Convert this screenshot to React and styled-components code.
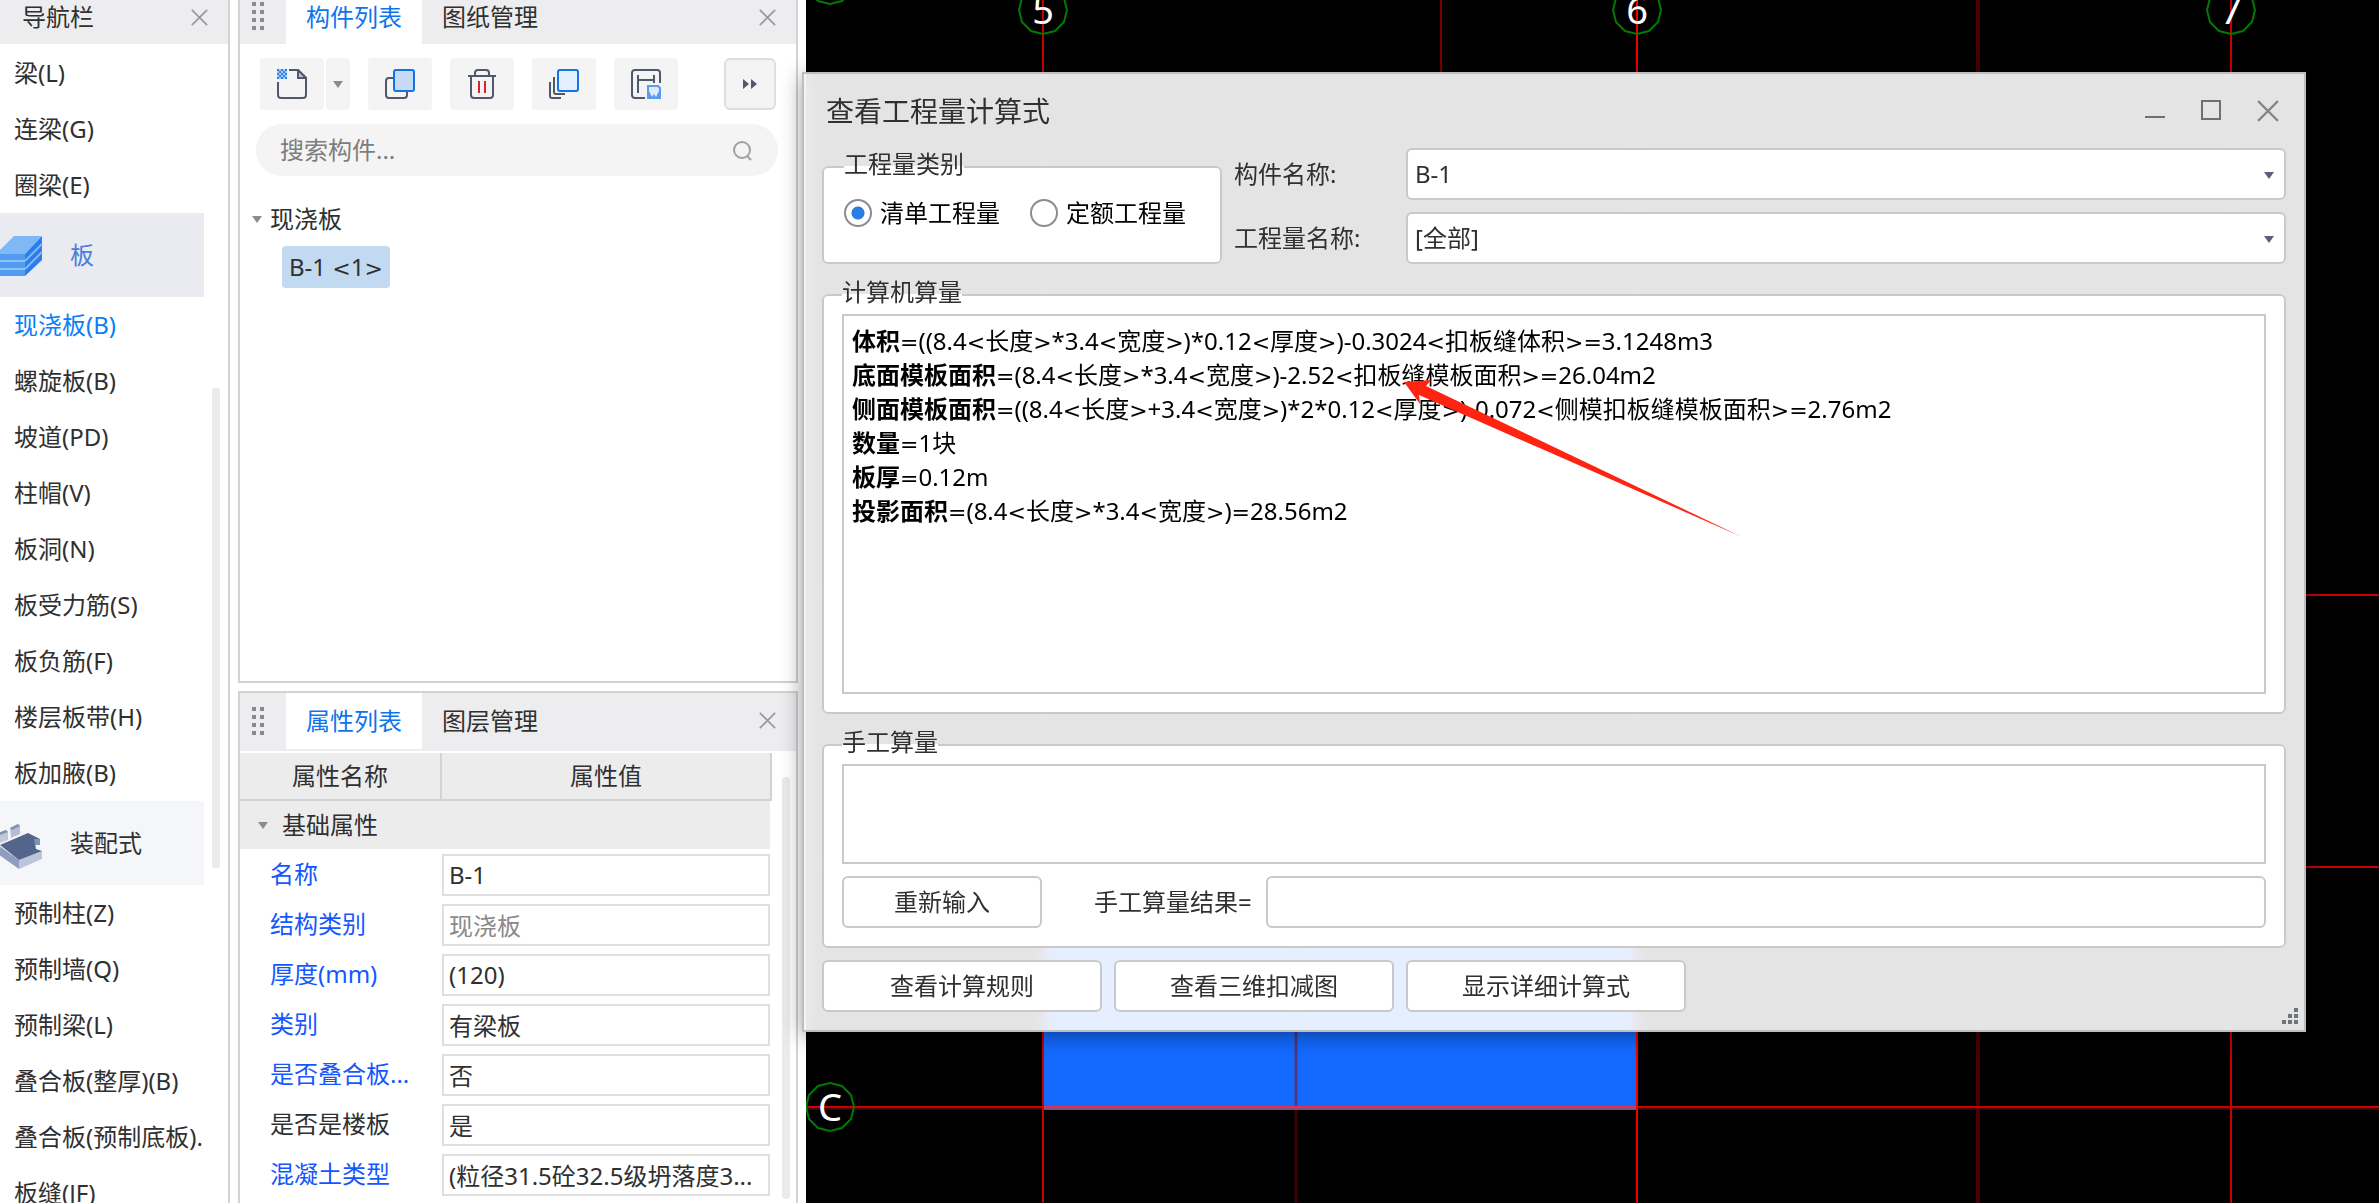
import React from "react"
import styled, { createGlobalStyle, css } from "styled-components"

const GlobalStyle = createGlobalStyle`
  *, *::before, *::after {
    box-sizing: border-box;
  }

  body {
    margin: 0;
    background: #fff;
    color: #303030;
    font-family: "Noto Sans", "Noto Sans CJK SC", sans-serif;
    font-size: 24px;
    line-height: 34px;
  }

  button, input, select, textarea {
    font: inherit;
    color: inherit;
  }
`

const Workspace = styled.div`
  display: flex;
  gap: 8px;
  height: 100vh;
  overflow: hidden;
  position: relative;
`

/* ---------- shared panel parts ---------- */

const PanelHeader = styled.header`
  display: flex;
  flex: none;
  align-items: stretch;
  height: ${(p) => (p.$tall ? 58 : 44)}px;
  padding-bottom: ${(p) => (p.$tall ? 2 : 0)}px;
  padding-right: 20px;
  background: #ededf0;
`

const CloseButton = styled.button`
  display: flex;
  align-items: center;
  margin-left: auto;
  padding: 0;
  border: 0;
  background: none;
  color: #9a9a9c;
`

const Grip = styled.svg`
  flex: none;
  width: 46px;
  height: 100%;
`

const Tab = styled.button`
  padding: 0 20px;
  border: 0;
  background: ${(p) => (p.$active ? "#fff" : "transparent")};
  color: ${(p) => (p.$active ? "#0f73ee" : "#303030")};
`

/* the upper strip is cut by the window edge, so its content sits high */
const upperStrip = css`
  ${Tab}, ${CloseButton} {
    padding-bottom: 10px;
  }
`

const ScrollThumb = styled.div`
  flex: none;
  width: 8px;
  border-radius: 3px;
  background: #ebebeb;
`

/* wider angle brackets and equals signs than the text face has */
const Sign = styled.span`
  font-family: "DejaVu Sans", sans-serif;
  font-size: 22px;
  line-height: 1;
`

/* ---------- navigation ---------- */

const NavPanel = styled.nav`
  display: flex;
  flex: none;
  flex-direction: column;
  width: 230px;
  border-right: 2px solid #d2d2d5;
  background: #fff;

  ${PanelHeader} {
    ${upperStrip}
    padding-left: 22px;
  }
`

const NavTitle = styled.span`
  flex: 1;
`

const NavBody = styled.div`
  display: flex;
  flex: 1;
  gap: 8px;
  min-height: 0;
  padding-top: 1px;

  ${ScrollThumb} {
    height: 480px;
    margin-top: 343px;
  }
`

const NavList = styled.div`
  width: 204px;
  overflow: hidden;
`

const NavLink = styled.a`
  display: block;
  height: 56px;
  padding-left: 14px;
  line-height: 56px;
  white-space: nowrap;
  text-decoration: none;
  color: ${(p) => (p.$active ? "#0a80f5" : "#303030")};
`

const NavGroup = styled.a`
  display: flex;
  align-items: center;
  gap: 10px;
  height: 84px;
  text-decoration: none;
  background: ${(p) => (p.$open ? "#eaebf0" : "#f5f6f9")};
  color: ${(p) => (p.$open ? "#4a7de0" : "#303030")};
`

/* ---------- middle column ---------- */

const DockColumn = styled.div`
  display: grid;
  flex: none;
  grid-template-rows: 4fr 3fr;
  gap: 8px;
  width: 560px;
`

const Panel = styled.section`
  display: flex;
  flex-direction: column;
  min-height: 0;
  overflow: hidden;
  border: 2px solid #d2d2d5;
  border-top-width: ${(p) => (p.$cut ? 0 : 2)}px;
  border-bottom-width: ${(p) => (p.$cut ? 2 : 0)}px;
  background: #fff;

  ${(p) => p.$cut && upperStrip}
`

const Toolbar = styled.div`
  display: flex;
  gap: 18px;
  padding: 14px 20px;
`

const ToolButton = styled.button`
  display: flex;
  align-items: center;
  justify-content: center;
  width: ${(p) => (p.$narrow ? 24 : 64)}px;
  height: 52px;
  padding: 0;
  border: 0;
  border-radius: 4px;
  background: #f4f4f5;
`

const MoreButton = styled(ToolButton)`
  width: 52px;
  margin-left: auto;
  border: 2px solid #dedee0;
  border-radius: 6px;
`

const SplitButton = styled.div`
  display: flex;
  gap: 2px;
`

const SearchBox = styled.label`
  display: flex;
  align-items: center;
  height: 52px;
  margin: 0 18px 0 16px;
  padding: 0 24px;
  border-radius: 26px;
  background: #f4f4f5;

  input {
    flex: 1;
    min-width: 0;
    padding: 0;
    border: 0;
    outline: 0;
    background: none;
  }

  input::placeholder {
    color: #7d7d7d;
    opacity: 1;
  }
`

const Tree = styled.ul`
  margin: 0;
  padding: 26px 12px;
  list-style: none;
`

const TreeBranch = styled.div`
  display: flex;
  align-items: center;
  gap: 8px;
  height: 34px;
`

const TreeItem = styled.button`
  display: block;
  height: 42px;
  margin: 10px 0 0 30px;
  padding: 0 7px;
  border: 0;
  border-radius: 4px;
  background: #c2d9f2;
`

const PropertyArea = styled.div`
  display: flex;
  gap: 10px;
  min-height: 0;
  padding-top: 2px;

  ${ScrollThumb} {
    margin-top: 24px;
  }
`

const PropertyTable = styled.table`
  flex: none;
  width: 532px;
  border-collapse: separate;
  border-spacing: 0;
  table-layout: fixed;

  th, td {
    padding: 0;
    font-weight: 400;
    text-align: left;
  }

  thead th {
    height: 48px;
    border-right: 2px solid #d2d2d5;
    border-bottom: 2px solid #d2d2d5;
    background: #ececec;
    text-align: center;
  }

  thead th:first-child {
    width: 202px;
  }
`

const SectionCell = styled.td`
  height: 48px;
  border-right: 2px solid #fff;
  background: #ececec;

  div {
    display: flex;
    align-items: center;
    gap: 14px;
    padding-left: 18px;
  }
`

const PropertyRow = styled.tr`
  height: 50px;

  th {
    padding-left: 30px;
    white-space: nowrap;
    color: ${(p) => (p.$plain ? "#303030" : "#1557ff")};
  }

  td {
    padding: 5px 2px 3px 0;
  }

  input {
    display: block;
    width: 100%;
    height: 42px;
    padding: 0 5px;
    border: 2px solid #dfdfdf;
    outline: 0;
    background: #fff;
    color: ${(p) => (p.$disabled ? "#8a8a8a" : "#303030")};
  }
`

/* ---------- drawing area ---------- */

const DrawingArea = styled.main`
  flex: 1;
  min-width: 0;
  background: #000;

  svg {
    display: block;
    width: 100%;
    height: 100%;
  }
`

/* ---------- dialog ---------- */

const Dialog = styled.section`
  position: absolute;
  top: 72px;
  left: 802px;
  right: 73px;
  padding: 0 18px 18px;
  border: 2px solid #bdbebf;
  background: rgba(255, 255, 255, 0.894);
  backdrop-filter: blur(8px);
  box-shadow: 0 4px 20px rgba(0, 0, 0, 0.4);
`

const TitleBar = styled.header`
  display: flex;
  align-items: center;
  gap: 36px;
  height: 74px;
  padding-right: 7px;

  h1 {
    flex: 1;
    margin: 0;
    padding-left: 4px;
    font-size: 28px;
    font-weight: 400;
  }

  button {
    display: flex;
    padding: 0;
    border: 0;
    background: none;
  }
`

const FilterRow = styled.div`
  display: grid;
  grid-template-columns: 400px 160px 1fr;
  grid-template-rows: 52px 52px;
  gap: 12px;
  align-items: center;
`

const Group = styled.fieldset`
  min-width: 0;
  margin: 16px 0 0;
  padding: 4px 18px 18px;
  border: 2px solid #c9c9c9;
  border-radius: 6px;
  background: #fff;

  legend {
    padding: 0 0 6px;
    line-height: 24px;
  }
`

const RadioGroup = styled(Group)`
  display: flex;
  grid-row: span 2;
  align-items: flex-start;
  align-self: end;
  gap: 30px;
  height: 112px;
  margin: 0;
  padding: 14px 20px 0;
`

const Radio = styled.label`
  display: flex;
  align-items: center;
  gap: 8px;
  color: #000;

  input {
    appearance: none;
    width: 28px;
    height: 28px;
    margin: 0;
    border: 2px solid #8c8c8c;
    border-radius: 50%;
    background: #fff;
  }

  input:checked {
    background: radial-gradient(circle, #2a7de1 0 6px, #fff 7px);
  }
`

const SelectBox = styled.div`
  position: relative;

  select {
    display: block;
    width: 100%;
    height: 52px;
    padding: 0 30px 0 7px;
    appearance: none;
    border: 2px solid #c9c9c9;
    border-radius: 6px;
    background: #fff;
  }

  svg {
    position: absolute;
    top: 23px;
    right: 12px;
    pointer-events: none;
  }
`

const FormulaBox = styled.div`
  height: 380px;
  padding: 8px;
  border: 2px solid #c9c9c9;
  background: #fff;
  color: #000;

  p {
    margin: 0;
    white-space: nowrap;
  }
`

const ManualInput = styled.textarea`
  display: block;
  width: 100%;
  height: 100px;
  padding: 8px;
  border: 2px solid #c9c9c9;
  outline: 0;
  resize: none;
  background: #fff;
`

const ResultRow = styled.div`
  display: flex;
  align-items: center;
  gap: 12px;
  margin-top: 12px;

  label {
    width: 160px;
    margin-left: 40px;
    white-space: nowrap;
  }

  input {
    flex: 1;
    min-width: 0;
    height: 52px;
    padding: 0 8px;
    border: 2px solid #c9c9c9;
    border-radius: 6px;
    outline: 0;
    background: #fff;
  }
`

const Button = styled.button`
  width: ${(p) => (p.$small ? 200 : 280)}px;
  height: 52px;
  padding: 0;
  border: 2px solid #c9c9c9;
  border-radius: 6px;
  background: #fff;
`

const Footer = styled.footer`
  display: flex;
  gap: 12px;
  margin-top: 12px;
`

const ResizeGrip = styled.svg`
  position: absolute;
  right: 6px;
  bottom: 6px;
`

const PointerArrow = styled.svg`
  position: absolute;
  top: 304px;
  left: 596px;
  pointer-events: none;
`

/* ---------- icons ---------- */

const CrossIcon = ({ size = 17, color = "#9a9a9c" }) => (
  <svg width={size} height={size} viewBox="0 0 20 20" stroke={color} strokeWidth="2">
    <path d="M1 1L19 19M19 1L1 19" />
  </svg>
)

const CaretIcon = ({ color = "#8c8c8c" }) => (
  <svg width="10" height="8" viewBox="0 0 10 8" fill={color}>
    <path d="M0 1H10L5 8Z" />
  </svg>
)

const GripIcon = ({ top }) => (
  <Grip fill="#8b8b8d">
    {[0, 1, 2, 3].map((row) => (
      <React.Fragment key={row}>
        <rect x="12" y={top + row * 8} width="4" height="4" />
        <rect x="20" y={top + row * 8} width="4" height="4" />
      </React.Fragment>
    ))}
  </Grip>
)

const SlabIcon = () => (
  <svg width="60" height="60">
    <path d="M14 11H42L25 29H-4Z" fill="#7fb8f5" />
    <path d="M42 11V35L25 51V29Z" fill="#2a7cf0" />
    <path d="M42 19L25 36M42 27L25 44" stroke="#7fb8f5" strokeWidth="2" />
    <path d="M-4 29H25V35H-4ZM-4 37H25V43H-4ZM-4 45H25V51H-4Z" fill="#529df3" />
    <path d="M-4 35H25V37H-4ZM-4 43H25V45H-4Z" fill="#8fc2f8" />
  </svg>
)

const PrefabIcon = () => (
  <svg width="60" height="60">
    <path d="M-2 20L6 17L8 19V27L0 30Z" fill="#c0c8da" />
    <path d="M-2 20L6 17L8 19L0 22Z" fill="#8290b2" />
    <path d="M10 15L18 11L20 13V21L11 25Z" fill="#b3bdd3" />
    <path d="M10 15L18 11L20 13L12 17Z" fill="#8290b2" />
    <path d="M-2 32L19 47V56L-2 41Z" fill="#8f9dbe" />
    <path d="M19 47L42 38V46L19 56Z" fill="#bcc5da" />
    <path d="M0 32L28 20L40 26L35 30L36 36L42 38L19 47Z" fill="#54658c" />
    <path d="M34 26L40 26V32L35 32Z" fill="#8290b2" />
  </svg>
)

const ToolIcon = ({ children }) => (
  <svg width="30" height="30" viewBox="0 0 30 30" fill="none" stroke="#4f586c" strokeWidth="2">
    {children}
  </svg>
)

const NewIcon = () => (
  <ToolIcon>
    <rect x="0" y="0" width="10" height="10" fill="#a9cbf7" stroke="none" />
    <path
      d="M0 1H10M0 5H10M0 9H10"
      stroke="#2f7fe8"
      strokeDasharray="2 2"
    />
    <path d="M2 3H10M2 7H10" stroke="#2f7fe8" strokeDasharray="2 2" />
    <path d="M1 13V26Q1 29 4 29H26Q29 29 29 26V9L21 1H12" />
    <path d="M21 1V9H29Z" fill="#c3c7cf" />
  </ToolIcon>
)

const CopyIcon = () => (
  <ToolIcon>
    <path d="M8 9H4Q1 9 1 12V26Q1 29 4 29H19Q22 29 22 26V23" />
    <rect x="9" y="1" width="20" height="21" rx="2" fill="#c6daf4" stroke="#1473e6" />
  </ToolIcon>
)

const TrashIcon = () => (
  <ToolIcon>
    <path d="M8 6V4Q8 1 11 1H19Q22 1 22 4V6M1 7H29" />
    <path d="M4 8V26Q4 29 7 29H23Q26 29 26 26V8" />
    <path d="M12 12V24M18 12V24" stroke="#d8232a" />
  </ToolIcon>
)

const StackIcon = () => (
  <ToolIcon>
    <path d="M1 13V27Q1 29 3 29H12M5 8V23Q5 25 7 25H16" />
    <rect x="9" y="1" width="20" height="21" rx="2" fill="#e4effd" stroke="#1473e6" />
  </ToolIcon>
)

const ArchiveIcon = () => (
  <ToolIcon>
    <path d="M14 29H4Q1 29 1 26V4Q1 1 4 1H26Q29 1 29 4V14" />
    <path d="M7 6V24M23 6V14M7 11H23" />
    <path d="M17 17H27L29 19V29H17Z" fill="#dfecfd" stroke="#5a9bf0" />
    <path d="M18 22L20 26L21 28L23 25L25 28L28 22V29H18Z" fill="#5a9bf0" stroke="none" />
  </ToolIcon>
)

/* ---------- data ---------- */

const topItems = ["梁(L)", "连梁(G)", "圈梁(E)"]

const slabItems = [
  "现浇板(B)",
  "螺旋板(B)",
  "坡道(PD)",
  "柱帽(V)",
  "板洞(N)",
  "板受力筋(S)",
  "板负筋(F)",
  "楼层板带(H)",
  "板加腋(B)",
]

const prefabItems = [
  "预制柱(Z)",
  "预制墙(Q)",
  "预制梁(L)",
  "叠合板(整厚)(B)",
  "叠合板(预制底板).",
  "板缝(JF)",
]

const properties = [
  { name: "名称", value: "B-1" },
  { name: "结构类别", value: "现浇板", disabled: true },
  { name: "厚度(mm)", value: "(120)" },
  { name: "类别", value: "有梁板" },
  { name: "是否叠合板...", value: "否" },
  { name: "是否是楼板", value: "是", plain: true },
  { name: "混凝土类型", value: "(粒径31.5砼32.5级坍落度3..." },
]

const formulas = [
  ["体积", "=((8.4<长度>*3.4<宽度>)*0.12<厚度>)-0.3024<扣板缝体积>=3.1248m3"],
  ["底面模板面积", "=(8.4<长度>*3.4<宽度>)-2.52<扣板缝模板面积>=26.04m2"],
  ["侧面模板面积", "=((8.4<长度>+3.4<宽度>)*2*0.12<厚度>)-0.072<侧模扣板缝模板面积>=2.76m2"],
  ["数量", "=1块"],
  ["板厚", "=0.12m"],
  ["投影面积", "=(8.4<长度>*3.4<宽度>)=28.56m2"],
]

/* ---------- parts ---------- */

const SignedText = ({ text }) =>
  text
    .split(/([<>=])/)
    .map((part, i) => (/^[<>=]$/.test(part) ? <Sign key={i}>{part}</Sign> : part))

const NavItems = ({ items, active }) =>
  items.map((item) => (
    <NavLink key={item} href="#" $active={item === active}>
      {item}
    </NavLink>
  ))

const Navigation = () => (
  <NavPanel>
    <PanelHeader>
      <NavTitle>导航栏</NavTitle>
      <CloseButton aria-label="关闭">
        <CrossIcon />
      </CloseButton>
    </PanelHeader>
    <NavBody>
      <NavList>
        <NavItems items={topItems} />
        <NavGroup href="#" $open>
          <SlabIcon />
          板
        </NavGroup>
        <NavItems items={slabItems} active="现浇板(B)" />
        <NavGroup href="#">
          <PrefabIcon />
          装配式
        </NavGroup>
        <NavItems items={prefabItems} />
      </NavList>
      <ScrollThumb />
    </NavBody>
  </NavPanel>
)

const ComponentPanel = () => (
  <Panel $cut>
    <PanelHeader>
      <GripIcon top={2} />
      <Tab $active>构件列表</Tab>
      <Tab>图纸管理</Tab>
      <CloseButton aria-label="关闭">
        <CrossIcon />
      </CloseButton>
    </PanelHeader>
    <Toolbar>
      <SplitButton>
        <ToolButton aria-label="新建">
          <NewIcon />
        </ToolButton>
        <ToolButton aria-label="新建选项" $narrow>
          <CaretIcon />
        </ToolButton>
      </SplitButton>
      <ToolButton aria-label="复制">
        <CopyIcon />
      </ToolButton>
      <ToolButton aria-label="删除">
        <TrashIcon />
      </ToolButton>
      <ToolButton aria-label="层间复制">
        <StackIcon />
      </ToolButton>
      <ToolButton aria-label="存档">
        <ArchiveIcon />
      </ToolButton>
      <MoreButton aria-label="更多">
        <svg width="16" height="12" fill="#4f586c">
          <path d="M1 1L7 6L1 11ZM9 1L15 6L9 11Z" />
        </svg>
      </MoreButton>
    </Toolbar>
    <SearchBox>
      <input type="text" placeholder="搜索构件..." aria-label="搜索构件" />
      <svg width="24" height="24" fill="none" stroke="#a0a0a0" strokeWidth="2">
        <circle cx="12" cy="12" r="8" />
        <path d="M17 18L21 22" />
      </svg>
    </SearchBox>
    <Tree>
      <li>
        <TreeBranch>
          <CaretIcon />
          现浇板
        </TreeBranch>
        <TreeItem>
          <SignedText text="B-1 <1>" />
        </TreeItem>
      </li>
    </Tree>
  </Panel>
)

const PropertyPanel = () => (
  <Panel>
    <PanelHeader $tall>
      <GripIcon top={14} />
      <Tab $active>属性列表</Tab>
      <Tab>图层管理</Tab>
      <CloseButton aria-label="关闭">
        <CrossIcon />
      </CloseButton>
    </PanelHeader>
    <PropertyArea>
      <PropertyTable>
        <thead>
          <tr>
            <th>属性名称</th>
            <th>属性值</th>
          </tr>
        </thead>
        <tbody>
          <tr>
            <SectionCell colSpan={2}>
              <div>
                <CaretIcon />
                基础属性
              </div>
            </SectionCell>
          </tr>
          {properties.map((prop, i) => (
            <PropertyRow key={prop.name} $plain={prop.plain} $disabled={prop.disabled}>
              <th scope="row">
                <label htmlFor={`prop-${i}`}>{prop.name}</label>
              </th>
              <td>
                <input id={`prop-${i}`} defaultValue={prop.value} disabled={prop.disabled} />
              </td>
            </PropertyRow>
          ))}
        </tbody>
      </PropertyTable>
      <ScrollThumb />
    </PropertyArea>
  </Panel>
)

const AxisMark = ({ x, y, label }) => (
  <g transform={`translate(${x} ${y})`}>
    <path
      d="M0 -24L12 -21L21 -12L24 0L21 12L12 21L0 24L-12 21L-21 12L-24 0L-21 -12L-12 -21Z"
      fill="none"
      stroke="#007a00"
      strokeWidth="2"
    />
    <text y="14" fill="#fff" fontSize="38" textAnchor="middle">
      {label}
    </text>
  </g>
)

const Drawing = () => (
  <DrawingArea>
    <svg>
      <rect x="238" y="866" width="594" height="242" fill="#146aff" />
      <path d="M635 0V700" stroke="#7a0000" strokeWidth="2" />
      <path d="M490 866V1108" stroke="#4a3a86" strokeWidth="3" />
      <path d="M490 1110V1203" stroke="#400000" strokeWidth="3" />
      <path d="M1172 0V1203" stroke="#480000" strokeWidth="4" />
      <path d="M0 1107H1573M0 867H1573M0 595H1573" stroke="#c80000" strokeWidth="2" />
      <path d="M0 1109H1573" stroke="#480000" strokeWidth="2" />
      <path d="M238 1107H832" stroke="#e8304a" strokeWidth="2" />
      <path d="M238 1109H832" stroke="#7d4f86" strokeWidth="2" />
      <path d="M237 0V1203M1425 0V1203" stroke="#c80000" strokeWidth="2" />
      <path d="M831 0V1203" stroke="#f50000" strokeWidth="2" />
      <AxisMark x={237} y={10} label="5" />
      <AxisMark x={831} y={10} label="6" />
      <AxisMark x={1425} y={10} label="7" />
      <AxisMark x={24} y={1107} label="C" />
      <AxisMark x={24} y={-20} label="" />
    </svg>
  </DrawingArea>
)

const QuantityDialog = () => (
  <Dialog role="dialog" aria-labelledby="dialog-title">
    <TitleBar>
      <h1 id="dialog-title">查看工程量计算式</h1>
      <button aria-label="最小化">
        <svg width="20" height="22" stroke="#6f6f6f" strokeWidth="2">
          <path d="M0 17H20" />
        </svg>
      </button>
      <button aria-label="最大化">
        <svg width="20" height="22" fill="none" stroke="#6f6f6f" strokeWidth="2">
          <rect x="1" y="1" width="18" height="18" />
        </svg>
      </button>
      <button aria-label="关闭">
        <CrossIcon size={22} color="#858585" />
      </button>
    </TitleBar>

    <FilterRow>
      <RadioGroup>
        <legend>工程量类别</legend>
        <Radio>
          <input type="radio" name="kind" defaultChecked />
          清单工程量
        </Radio>
        <Radio>
          <input type="radio" name="kind" />
          定额工程量
        </Radio>
      </RadioGroup>
      <label htmlFor="component">构件名称:</label>
      <SelectBox>
        <select id="component">
          <option>B-1</option>
        </select>
        <CaretIcon color="#59627a" />
      </SelectBox>
      <label htmlFor="quantity">工程量名称:</label>
      <SelectBox>
        <select id="quantity">
          <option>[全部]</option>
        </select>
        <CaretIcon color="#59627a" />
      </SelectBox>
    </FilterRow>

    <Group>
      <legend>计算机算量</legend>
      <FormulaBox>
        {formulas.map(([name, text]) => (
          <p key={name}>
            <b>{name}</b>
            <SignedText text={text} />
          </p>
        ))}
      </FormulaBox>
    </Group>

    <Group>
      <legend>手工算量</legend>
      <ManualInput aria-label="手工算量" />
      <ResultRow>
        <Button $small>重新输入</Button>
        <label htmlFor="result">手工算量结果=</label>
        <input id="result" type="text" />
      </ResultRow>
    </Group>

    <Footer>
      <Button>查看计算规则</Button>
      <Button>查看三维扣减图</Button>
      <Button>显示详细计算式</Button>
    </Footer>

    <ResizeGrip width="16" height="16" fill="#6f747c">
      <path d="M12 0h4v4h-4zM6 6h4v4h-4zM12 6h4v4h-4zM0 12h4v4h-4zM6 12h4v4h-4zM12 12h4v4h-4z" />
    </ResizeGrip>

    <PointerArrow width="346" height="162" fill="#ff2312">
      <path d="M4 4L31 2L26 8L342 159L19 17L20 26Z" />
    </PointerArrow>
  </Dialog>
)

const App = () => (
  <>
    <GlobalStyle />
    <Workspace>
      <Navigation />
      <DockColumn>
        <ComponentPanel />
        <PropertyPanel />
      </DockColumn>
      <Drawing />
      <QuantityDialog />
    </Workspace>
  </>
)

export default App
